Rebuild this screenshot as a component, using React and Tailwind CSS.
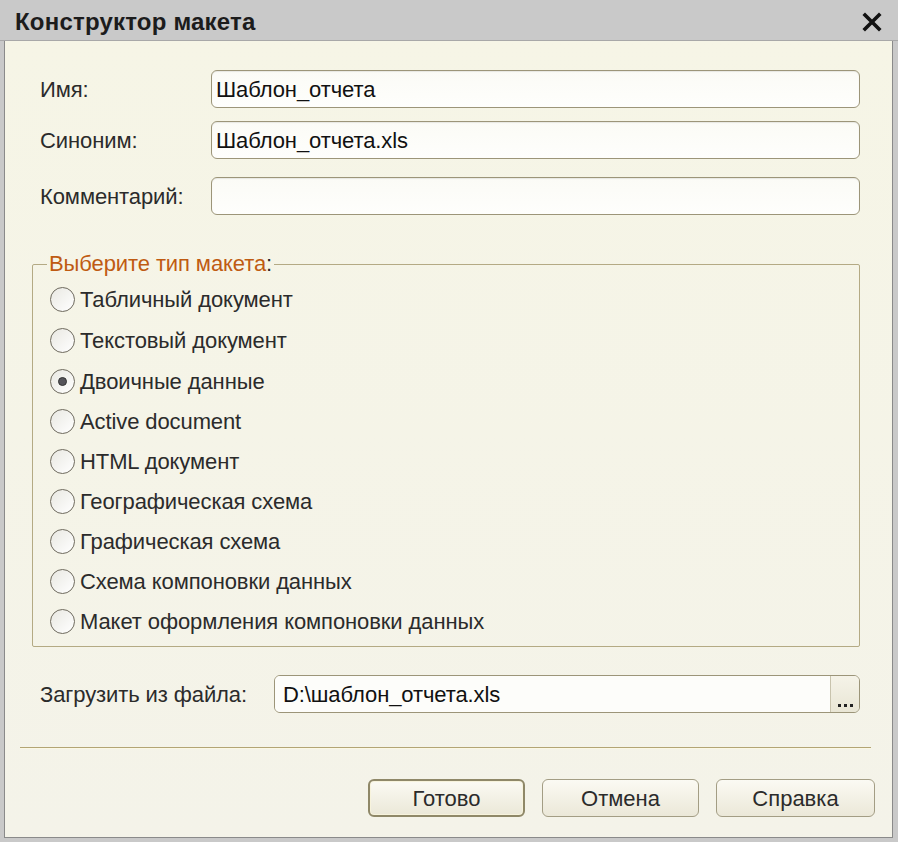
import React from "react";

const font = { fontFamily: '"Liberation Sans", Arial, sans-serif' };

function Field({ label, value, labelWidth = "w-[171px]" }) {
  return (
    <div className="flex items-center">
      <div className={`${labelWidth} shrink-0 text-[22px] text-[#2b2b2b] tracking-[-0.1px]`}>{label}</div>
      <div className="flex-1 h-[38px] rounded-[6px] border border-[#9c9579] bg-gradient-to-b from-[#fbfbf6] to-[#fefefc] flex items-center px-[4px] text-[22px] text-[#111] tracking-[-0.1px] shadow-[inset_0_1px_1px_rgba(0,0,0,0.08)]">
        {value}
      </div>
    </div>
  );
}

function Radio({ label, checked }) {
  return (
    <div className="h-[40px] flex items-center pl-[17px]">
      <div className="w-[25px] h-[25px] rounded-full border-[1.5px] border-[#6e6a5e] bg-gradient-to-br from-[#e9e8e2] to-[#ffffff] flex items-center justify-center shrink-0">
        {checked && <div className="w-[9px] h-[9px] rounded-full bg-[#55545a] border border-[#333]" />}
      </div>
      <span className="ml-[5px] text-[22px] text-[#2b2b2b] tracking-[-0.1px]">{label}</span>
    </div>
  );
}

function Button({ children, primary, w = "w-[157px]" }) {
  return (
    <div
      className={`${w} h-[38px] rounded-[6px] flex items-center justify-center text-[22px] text-[#2b2b2b] bg-gradient-to-b from-[#fbfaf3] to-[#ebe8d8] ${
        primary ? "border-2 border-[#8f8868] shadow-[inset_0_0_0_1px_#f7f3dc]" : "border border-[#a39d84]"
      }`}
    >
      {children}
    </div>
  );
}

export default function App() {
  const items = [
    "Табличный документ",
    "Текстовый документ",
    "Двоичные данные",
    "Active document",
    "HTML документ",
    "Географическая схема",
    "Графическая схема",
    "Схема компоновки данных",
    "Макет оформления компоновки данных",
  ];
  return (
    <div className="w-[898px] h-[842px] bg-[#c9c9c9] flex flex-col" style={font}>
      <div className="h-[41px] shrink-0 flex items-center justify-between pl-[15px] pr-[16px] pt-[3px] border-b border-[#a8a8a8]">
        <span className="text-[24px] font-bold text-[#1c1c1c] tracking-[0.2px]">Конструктор макета</span>
        <svg width="20" height="20" viewBox="0 0 20 20">
          <path d="M3 3 L17 17 M17 3 L3 17" stroke="#111" strokeWidth="3.6" strokeLinecap="square" />
        </svg>
      </div>
      <div className="flex-1 ml-[4px] mr-[5px] mb-[4px] border-l border-r border-b border-[#8a8a8a] bg-gradient-to-b from-[#f6f5e6] to-[#f4f3e9] flex flex-col pl-[35px] pr-[32px] pt-[29px]">
        <Field label="Имя:" value="Шаблон_отчета" />
        <div className="h-[13px]" />
        <Field label="Синоним:" value="Шаблон_отчета.xls" />
        <div className="h-[18px]" />
        <Field label="Комментарий:" value="" />

        <fieldset className="mt-[37px] -ml-[8px] border border-[#b4aa84] rounded-[2px] px-0 pt-0 pb-[5px] m-0">
          <legend className="ml-[14px] px-[2px] text-[22px] text-[#bf5b12] tracking-[-0.1px] leading-[24px]">
            Выберите тип макета<span className="text-[#2b2b2b]">:</span>
          </legend>
          <div className="flex flex-col pt-[3px]">
            {items.map((t, i) => (
              <div key={t} className={i === 1 || i === 2 ? "mt-[1px]" : ""}>
                <Radio label={t} checked={i === 2} />
              </div>
            ))}
          </div>
        </fieldset>

        <div className="mt-[28px] flex items-center">
          <div className="w-[234px] shrink-0 text-[22px] text-[#2b2b2b] tracking-[-0.1px]">Загрузить из файла:</div>
          <div className="flex-1 h-[38px] rounded-[6px] border border-[#9c9579] flex overflow-hidden">
            <div className="flex-1 bg-[#fdfdfa] flex items-center px-[8px] text-[22px] text-[#111] tracking-[-0.1px]">
              D:\шаблон_отчета.xls
            </div>
            <div className="w-[29px] border-l border-[#c8c3ad] bg-gradient-to-b from-[#f5f3e8] to-[#e9e6d5] flex items-end justify-center pb-[5px] gap-[3px]">
              <span className="w-[3px] h-[3px] bg-[#222]" />
              <span className="w-[3px] h-[3px] bg-[#222]" />
              <span className="w-[3px] h-[3px] bg-[#222]" />
            </div>
          </div>
        </div>

        <div className="mt-[34px] -ml-[20px] -mr-[11px] h-[2px] bg-[#b3a574] border-b border-[#fbf8e4]" />

        <div className="mt-[30px] -mr-[15px] flex justify-end gap-[17px]">
          <Button primary>Готово</Button>
          <Button>Отмена</Button>
          <Button w="w-[159px]">Справка</Button>
        </div>
      </div>
    </div>
  );
}
